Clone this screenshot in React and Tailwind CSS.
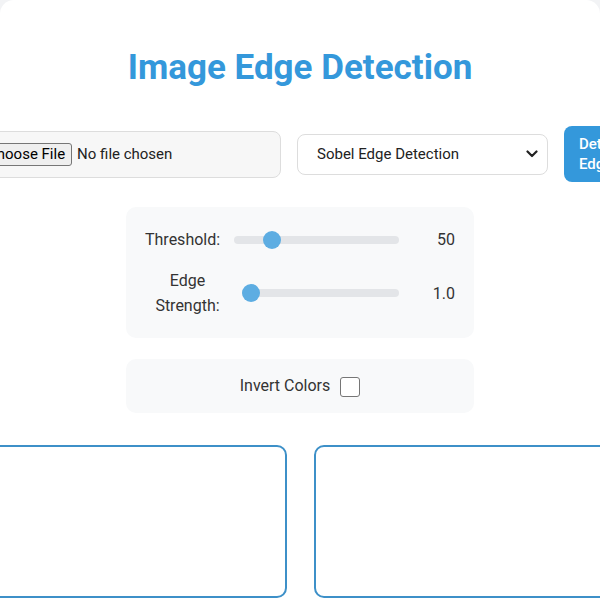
import React, { useState } from 'react';

const font = { fontFamily: 'Roboto, "Noto Sans", Arial, sans-serif' };

const Slider = ({ pct }) => (
  <div className="relative h-[8px] w-full rounded-full bg-[#e3e5e8]">
    <div
      className="absolute top-1/2 h-[18px] w-[18px] -translate-y-1/2 rounded-full bg-[#5dade2]"
      style={{ left: `calc((100% - 18px) * ${pct / 100})` }}
    />
  </div>
);

const App = () => {
  const [invert, setInvert] = useState(false);

  return (
    <div className="min-h-screen bg-[#f2f3f5] overflow-hidden" style={font}>
      <div className="w-[600px] rounded-t-[14px] bg-white pt-[47px] pb-[40px]">
        {/* Title */}
        <h1 className="text-center text-[35px] font-bold leading-[1.2] text-[#3498db]">
          Image Edge Detection
        </h1>

        {/* Controls */}
        <div className="mt-[37px] flex items-center justify-center gap-4">
          <label className="flex w-[312px] shrink-0 items-center gap-[5px] rounded-[8px] border border-[#dddddd] bg-[#f7f7f7] px-[10px] py-[11px] text-[15px] text-[#222]">
            <input type="file" className="hidden" />
            <span className="shrink-0 rounded-[3px] border border-[#767676] bg-[#efefef] px-[6px] leading-[21px] text-black">
              Choose File
            </span>
            <span className="whitespace-nowrap leading-[21px]">No file chosen</span>
          </label>

          <div className="flex h-[41px] w-[251px] shrink-0 items-center justify-between rounded-[8px] border border-[#dddddd] bg-white pl-[19px] pr-[9px] text-[15px] text-[#222]">
            <span>Sobel Edge Detection</span>
            <svg width="12" height="8" viewBox="0 0 12 8" fill="none">
              <path d="M1.5 1.5 L6 6 L10.5 1.5" stroke="#222" strokeWidth="2.2" strokeLinecap="round" strokeLinejoin="round" />
            </svg>
          </div>

          <button className="h-[56px] w-[67px] shrink-0 rounded-[8px] bg-[#3498db] px-[15px] text-left text-[15px] font-medium leading-[20px] text-white">
            Detect Edges
          </button>
        </div>

        {/* Sliders */}
        <div className="mx-auto mt-[25px] w-[348px] rounded-[10px] bg-[#f8f9fa] px-[19px] py-[20px] text-[16px] leading-[25px] text-[#333]">
          <div className="flex items-center gap-3">
            <span className="w-[77px] shrink-0">Threshold:</span>
            <div className="w-[165px] shrink-0">
              <Slider pct={19.6} />
            </div>
            <span className="w-[44px] shrink-0 text-right">50</span>
          </div>
          <div className="mt-[16px] flex items-center gap-3">
            <span className="w-[85px] shrink-0 text-center">Edge Strength:</span>
            <div className="w-[157px] shrink-0">
              <Slider pct={0} />
            </div>
            <span className="w-[44px] shrink-0 text-right">1.0</span>
          </div>
        </div>

        {/* Invert */}
        <div className="mx-auto mt-[21px] flex h-[54px] w-[348px] items-center justify-center gap-[10px] rounded-[10px] bg-[#f8f9fa] text-[16px] text-[#333]">
          <span>Invert Colors</span>
          <button
            onClick={() => setInvert(!invert)}
            className="mt-[1px] h-[20px] w-[20px] rounded-[3px] border border-[#767676] bg-white"
          />
        </div>

        {/* Canvases */}
        <div className="mt-[32px] flex justify-center gap-[27px]">
          <div className="h-[153px] w-[340px] shrink-0 rounded-[10px] border-2 border-[#3d90c8] bg-white" />
          <div className="h-[153px] w-[340px] shrink-0 rounded-[10px] border-2 border-[#3d90c8] bg-white" />
        </div>
      </div>
    </div>
  );
};

export default App;
